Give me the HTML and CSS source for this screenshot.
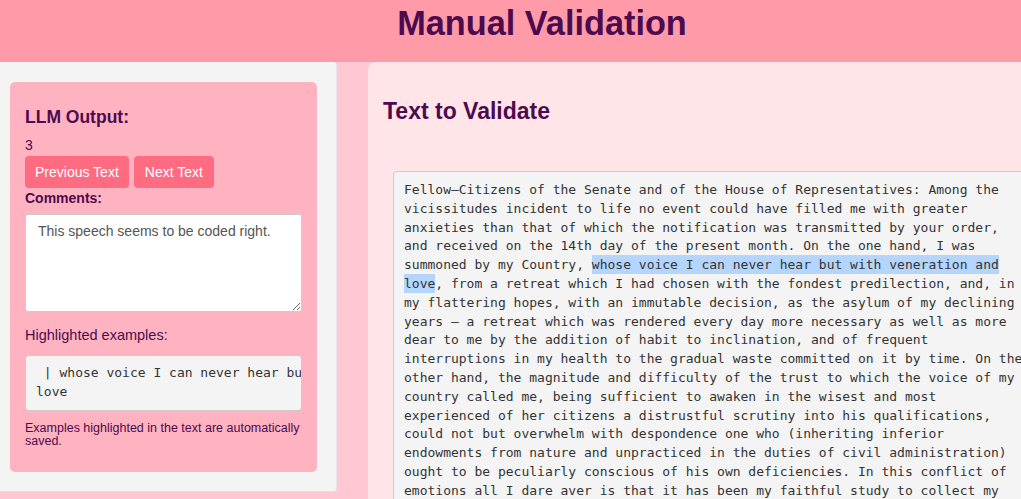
FILE: index.html
```html
<!DOCTYPE html>
<html lang="en">
<head>
<meta charset="utf-8">
<title>Manual Validation</title>
<link rel="stylesheet" href="styles.css">
</head>
<body>
<div class="page">
  <header class="topbar">
    <h1 class="title">Manual Validation</h1>
  </header>
  <div class="layout">
    <aside class="sidebar">
      <div class="card">
        <h3 class="card-title">LLM Output:</h3>
        <div class="output-value">3</div>
        <div class="btn-row">
          <button class="btn">Previous Text</button>
          <button class="btn">Next Text</button>
        </div>
        <label class="field-label" for="comments">Comments:</label>
        <textarea id="comments" class="comments">This speech seems to be coded right.</textarea>
        <div class="section-label">Highlighted examples:</div>
        <pre class="examples"> | whose voice I can never hear but with veneration and
love</pre>
        <p class="note">Examples highlighted in the text are automatically saved.</p>
      </div>
    </aside>
    <main class="content">
      <h2 class="content-title">Text to Validate</h2>
      <div class="text-box">Fellow–Citizens of the Senate and of the House of Representatives: Among the vicissitudes incident to life no event could have filled me with greater anxieties than that of which the notification was transmitted by your order, and received on the 14th day of the present month. On the one hand, I was summoned by my Country, <mark class="hl">whose voice I can never hear but with veneration and love</mark>, from a retreat which I had chosen with the fondest predilection, and, in my flattering hopes, with an immutable decision, as the asylum of my declining years – a retreat which was rendered every day more necessary as well as more dear to me by the addition of habit to inclination, and of frequent interruptions in my health to the gradual waste committed on it by time. On the other hand, the magnitude and difficulty of the trust to which the voice of my country called me, being sufficient to awaken in the wisest and most experienced of her citizens a distrustful scrutiny into his qualifications, could not but overwhelm with despondence one who (inheriting inferior endowments from nature and unpracticed in the duties of civil administration) ought to be peculiarly conscious of his own deficiencies. In this conflict of emotions all I dare aver is that it has been my faithful study to collect my duty from a just appreciation of every circumstance by which it might be affected.</div>
    </main>
  </div>
</div>
</body>
</html>
```

FILE: styles.css
```css
html, body {
  margin: 0;
  padding: 0;
  overflow: hidden;
  background: #ffc8d2;
}

body {
  font-family: "Liberation Sans", Arial, Helvetica, sans-serif;
  color: #4d0a4f;
}

.page {
  width: 1084px;
}

.topbar {
  background: #ff9aa8;
  height: 62px;
  box-sizing: border-box;
  padding-top: 4px;
  text-align: center;
}

.title {
  margin: 0;
  font-size: 34.3px;
  line-height: 39px;
  font-weight: bold;
  color: #4d0a4f;
}

.layout {
  display: flex;
  align-items: flex-start;
  gap: 31px;
}

.sidebar {
  width: 337px;
  height: 430px;
  box-sizing: border-box;
  background: #f4f4f4;
  padding: 20px 19px 20px 10px;
  border-right: 1px solid #e6e6e6;
  border-bottom: 1px solid #e3e3e3;
  border-radius: 0 4px 4px 0;
}

.card {
  height: 390px;
  box-sizing: border-box;
  background: #ffb3c1;
  border-radius: 5px;
  padding: 15px;
  display: flex;
  flex-direction: column;
  align-items: flex-start;
}

.card-title {
  margin: 10px 0 0;
  font-size: 17.5px;
  line-height: 20px;
  font-weight: bold;
}

.output-value {
  margin-top: 10px;
  font-size: 14px;
  line-height: 16px;
}

.btn-row {
  margin-top: 3px;
  display: flex;
  gap: 5px;
}

.btn {
  font-family: "Liberation Sans", Arial, Helvetica, sans-serif;
  font-size: 14px;
  height: 32px;
  padding: 0 10px;
  border: none;
  border-radius: 4px;
  background: #ff6b81;
  color: #ffffff;
}

.btn + .btn {
  padding: 0 11px;
}

.field-label {
  margin-top: 2px;
  font-size: 14px;
  line-height: 16px;
  font-weight: bold;
}

.comments {
  margin-top: 8px;
  width: 277px;
  height: 98px;
  box-sizing: border-box;
  padding: 8px 12px;
  border: 1px solid #cccccc;
  border-radius: 3px;
  background: #ffffff;
  font-family: "Liberation Sans", Arial, Helvetica, sans-serif;
  font-size: 14px;
  line-height: 16px;
  color: #555555;
}

.section-label {
  margin-top: 15px;
  font-size: 14.5px;
  line-height: 17px;
}

.examples {
  margin: 11px 0 0;
  width: 277px;
  height: 56px;
  box-sizing: border-box;
  padding: 7px 10px 9px;
  border: 1px solid #cccccc;
  border-radius: 4px;
  background: #f4f4f4;
  overflow: hidden;
  font-family: "DejaVu Sans Mono", "Liberation Mono", monospace;
  font-size: 13px;
  line-height: 19px;
  color: #333333;
}

.note {
  margin: 11px 0 0;
  font-size: 12.5px;
  line-height: 12.7px;
}

.content {
  flex: 1;
  min-height: 500px;
  background: #ffe4e8;
  border-radius: 8px 0 0 0;
  padding: 15px;
}

.content-title {
  margin: 21px 0 0;
  font-size: 23px;
  line-height: 26px;
  font-weight: bold;
}

.text-box {
  margin: 47px 0 0 10px;
  width: 79.5ch;
  padding: 9px 10px 7px;
  border: 1px solid #cccccc;
  border-radius: 4px;
  background: #f4f4f4;
  font-family: "DejaVu Sans Mono", "Liberation Mono", monospace;
  font-size: 13px;
  line-height: 18.8px;
  color: #333333;
}

.hl {
  background: #b4d5fe;
  color: #333333;
  padding: 1.8px 0;
}
```
